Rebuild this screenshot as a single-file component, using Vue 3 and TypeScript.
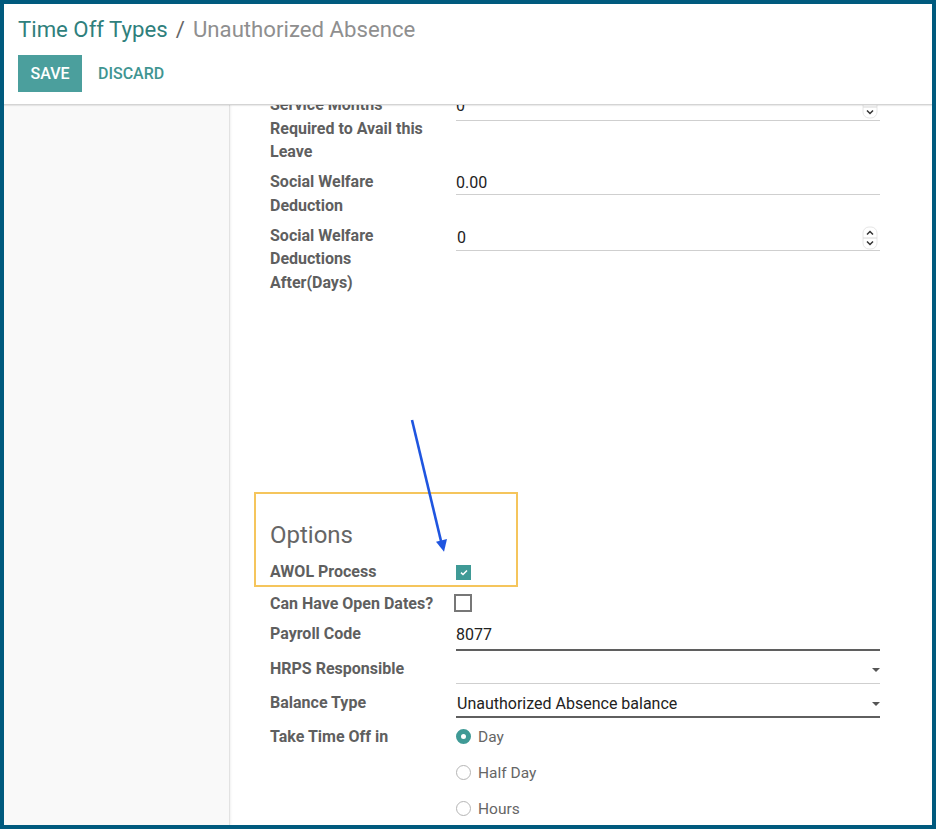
<script setup lang="ts">
const timeOffUnits = ["Day", "Half Day", "Hours"]
const selectedUnit = "Day"
</script>

<template>
  <div class="frame">
    <header class="topbar">
      <div class="crumbs">
        <span class="crumb-link">Time Off Types</span>
        <span class="crumb-sep">/</span>
        <span class="crumb-current">Unauthorized Absence</span>
      </div>
      <div class="actions">
        <button class="btn-save">SAVE</button>
        <button class="btn-discard">DISCARD</button>
      </div>
    </header>

    <div class="body">
      <aside class="side"></aside>
      <main class="sheet">
        <div class="form">
          <div class="row upper">
            <div class="label">Service Months Required to Avail this Leave</div>
            <div class="field h27">
              <span class="value">0</span>
              <svg class="stepper" width="16" height="24" viewBox="0 0 16 24">
                <rect x="1" y="1" width="14" height="22" rx="6" fill="#fff" stroke="#e6e6e6" />
                <line x1="1" y1="12" x2="15" y2="12" stroke="#d8d8d8" />
                <path d="M5 8.5 L8 5.5 L11 8.5" fill="none" stroke="#333" stroke-width="1.5" />
                <path d="M5 15.5 L8 18.5 L11 15.5" fill="none" stroke="#333" stroke-width="1.5" />
              </svg>
            </div>
          </div>

          <div class="row upper">
            <div class="label">Social Welfare Deduction</div>
            <div class="field h24"><span class="value">0.00</span></div>
          </div>

          <div class="row upper">
            <div class="label">Social Welfare Deductions After(Days)</div>
            <div class="field h26 low pad">
              <span class="value">0</span>
              <svg class="stepper" width="16" height="24" viewBox="0 0 16 24">
                <rect x="1" y="1" width="14" height="22" rx="6" fill="#fff" stroke="#e6e6e6" />
                <line x1="1" y1="12" x2="15" y2="12" stroke="#d8d8d8" />
                <path d="M5 8.5 L8 5.5 L11 8.5" fill="none" stroke="#333" stroke-width="1.5" />
                <path d="M5 15.5 L8 18.5 L11 15.5" fill="none" stroke="#333" stroke-width="1.5" />
              </svg>
            </div>
          </div>

          <h2 class="group-title">Options</h2>

          <div class="row awol">
            <div class="label">AWOL Process</div>
            <div class="check-cell">
              <span class="check on">
                <svg width="8" height="7" viewBox="0 0 8 7">
                  <path d="M1 3.6 L3 5.5 L7 1.4" fill="none" stroke="#fff" stroke-width="1.5" />
                </svg>
              </span>
            </div>
          </div>

          <div class="row open-dates">
            <div class="label">Can Have Open Dates?</div>
            <div class="check-cell"><span class="check off"></span></div>
          </div>

          <div class="row payroll">
            <div class="label">Payroll Code</div>
            <div class="field h29 low strong"><span class="value">8077</span></div>
          </div>

          <div class="row hrps">
            <div class="label">HRPS Responsible</div>
            <div class="field h27"><span class="value"></span><i class="caret"></i></div>
          </div>

          <div class="row balance">
            <div class="label">Balance Type</div>
            <div class="field h27 low pad strong">
              <span class="value">Unauthorized Absence balance</span><i class="caret"></i>
            </div>
          </div>

          <div class="row take">
            <div class="label">Take Time Off in</div>
            <div class="radios">
              <div v-for="unit in timeOffUnits" :key="unit" class="radio-line">
                <span class="radio" :class="{ on: unit === selectedUnit }"></span>
                <span>{{ unit }}</span>
              </div>
            </div>
          </div>
        </div>
      </main>
    </div>

    <!-- annotation drawn on top of the screenshot -->
    <div class="callout"></div>
    <svg class="arrow" width="60" height="150" viewBox="0 0 60 150">
      <line x1="6" y1="1" x2="35" y2="122" stroke="#1f55e0" stroke-width="2.6" />
      <path d="M30 122.7 L41 120 L38 132.7 Z" fill="#1f55e0" />
    </svg>
  </div>
</template>

<style scoped>
.frame {
  position: relative;
  width: 936px;
  height: 829px;
  box-sizing: border-box;
  border: 4px solid #005a7e;
  background: #fff;
  display: flex;
  flex-direction: column;
  overflow: hidden;
  font-family: Roboto, "Liberation Sans", sans-serif;
}

.topbar {
  height: 101px;
  flex: none;
  box-sizing: border-box;
  padding: 7px 14px 0;
  background: #fff;
  border-bottom: 1px solid #d4d4d4;
  box-shadow: 0 1px 1px rgba(0, 0, 0, 0.08);
  position: relative;
  z-index: 2;
}

.crumbs {
  display: flex;
  align-items: center;
  gap: 8px;
  height: 36px;
  font-size: 22.2px;
}

.crumb-link {
  color: #2f7f7c;
}

.crumb-sep {
  color: #666;
}

.crumb-current {
  color: #8f8f8f;
}

.actions {
  display: flex;
  align-items: center;
  margin-top: 8px;
}

.actions button {
  border: 0;
  font-family: inherit;
  font-size: 16px;
  font-weight: 500;
  height: 37px;
  padding: 0;
}

.btn-save {
  width: 64px;
  background: #4b9f9d;
  color: #fff;
}

.btn-discard {
  margin-left: 16px;
  background: none;
  color: #3f9592;
}

.body {
  flex: 1;
  display: flex;
  min-height: 0;
}

.side {
  width: 225px;
  flex: none;
  background: #f9f9f9;
  border-right: 1px solid #e2e2e2;
  box-shadow: 1px 0 2px rgba(0, 0, 0, 0.06);
}

.sheet {
  flex: 1;
  overflow: hidden;
  padding-left: 40px;
}

.form {
  width: 610px;
  margin-top: -12px;
}

.row {
  display: flex;
  margin-bottom: 6px;
}

.upper .field {
  margin-top: 1px;
}

.label {
  width: 186px;
  flex: none;
  box-sizing: border-box;
  padding-right: 24px;
  font-size: 16px;
  font-weight: 700;
  line-height: 23.7px;
  color: #5f5f5f;
}

.awol .label,
.open-dates .label {
  white-space: nowrap;
}

.field {
  flex: 1;
  box-sizing: border-box;
  border-bottom: 1.5px solid #cfcfcf;
  display: flex;
  justify-content: space-between;
  align-items: flex-start;
  position: relative;
}

.field.strong {
  border-bottom: 2px solid #5f5f5f;
}

.h24 {
  height: 24px;
}

.h26 {
  height: 26px;
}

.h27 {
  height: 27px;
}

.h29 {
  height: 29px;
}

.value {
  font-size: 16px;
  line-height: 24px;
  color: #222;
}

.pad .value {
  padding-left: 1px;
}

.low .value {
  padding-top: 1px;
}

.stepper {
  position: absolute;
  right: 2px;
  top: 1px;
}

.group-title {
  margin: 224px 0 8px;
  font-size: 24px;
  font-weight: 400;
  line-height: 33px;
  color: #666;
}

.awol {
  margin-bottom: 8px;
}

.open-dates {
  margin-bottom: 6px;
}

.payroll {
  margin-bottom: 6px;
}

.hrps {
  margin-bottom: 7px;
}

.balance {
  margin-bottom: 7px;
}

.check-cell {
  display: flex;
  align-items: center;
  height: 24px;
}

.check {
  display: flex;
  align-items: center;
  justify-content: center;
  box-sizing: border-box;
}

.check.on {
  width: 15px;
  height: 15px;
  margin-top: 1px;
  background: #3f9a96;
}

.check.off {
  width: 18px;
  height: 18px;
  margin-left: -2px;
  margin-top: -1px;
  border: 2px solid #777;
  background: #fff;
}

.caret {
  position: absolute;
  right: 0;
  top: 11px;
  width: 0;
  height: 0;
  border-left: 4px solid transparent;
  border-right: 4px solid transparent;
  border-top: 4px solid #555;
}

.radios {
  display: flex;
  flex-direction: column;
  gap: 12px;
}

.radio-line {
  display: flex;
  align-items: center;
  gap: 7px;
  height: 24px;
  font-size: 15.5px;
  color: #666;
}

.radio {
  width: 15px;
  height: 15px;
  box-sizing: border-box;
  border-radius: 50%;
  border: 1.5px solid #b5b5b5;
  background: #fff;
}

.radio.on {
  border: 5px solid #3f9a96;
}

.callout {
  position: absolute;
  left: 250px;
  top: 488px;
  width: 264px;
  height: 95px;
  box-sizing: border-box;
  border: 2.5px solid #f5c55c;
  z-index: 3;
}

.arrow {
  position: absolute;
  left: 402px;
  top: 415px;
  z-index: 4;
}
</style>

<style>
html,
body {
  margin: 0;
  background: #fff;
}
</style>
